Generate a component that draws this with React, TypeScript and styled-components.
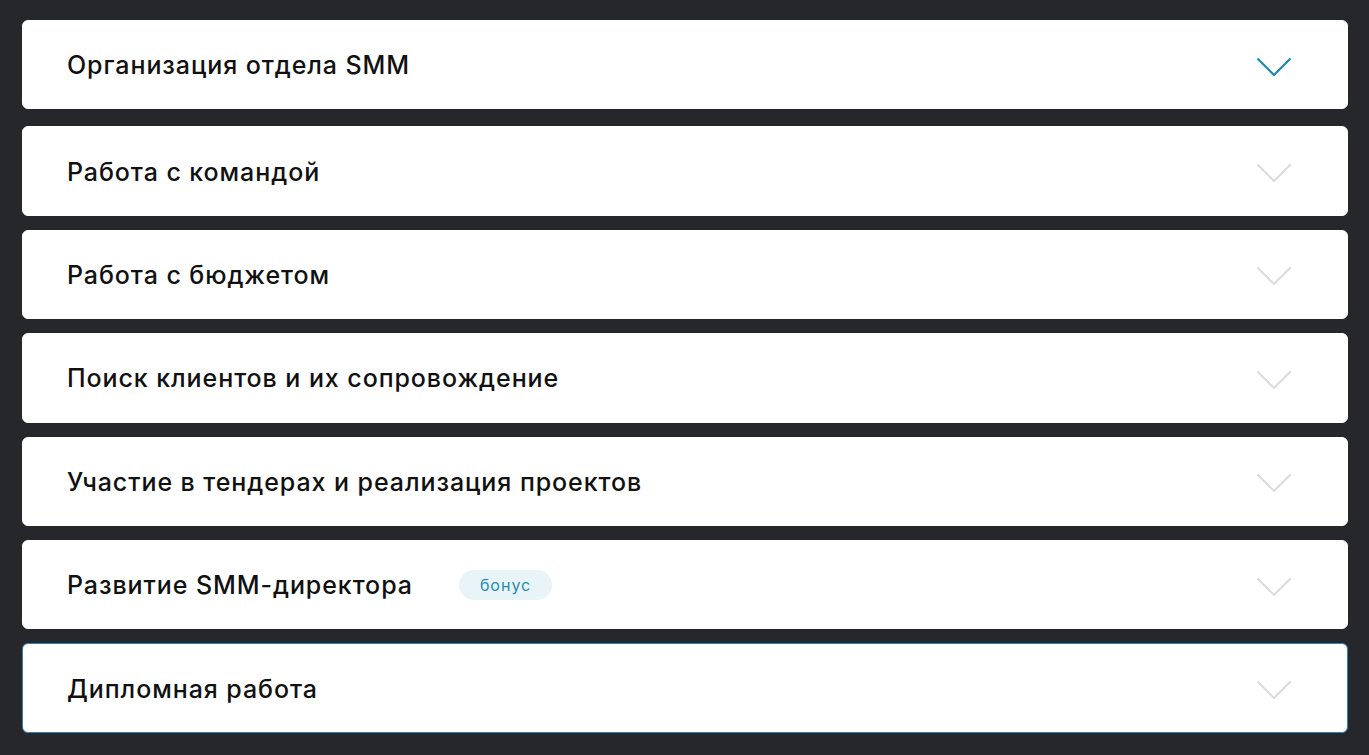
import styled, { createGlobalStyle } from "styled-components";

const GlobalStyle = createGlobalStyle`
  html, body {
    margin: 0;
    padding: 0;
    background: #26272b;
  }
  body {
    font-family: Inter, "Noto Sans", sans-serif;
  }
`;

interface Module {
  title: string;
  bonus?: boolean;
}

const modules: Module[] = [
  { title: "Организация отдела SMM" },
  { title: "Работа с командой" },
  { title: "Работа с бюджетом" },
  { title: "Поиск клиентов и их сопровождение" },
  { title: "Участие в тендерах и реализация проектов" },
  { title: "Развитие SMM-директора", bonus: true },
  { title: "Дипломная работа" },
];

const Chevron = ({ active }: { active: boolean }) => (
  <svg width="36" height="20" viewBox="0 0 36 20" fill="none">
    <path
      d="M1.5 1.5 L18 18 L34.5 1.5"
      stroke={active ? "#1c86b5" : "#dcdcdc"}
      strokeWidth="2.2"
    />
  </svg>
);

const App = () => (
  <>
    <GlobalStyle />
    <StyledList>
      {modules.map((m, i) => (
        <StyledItem
          key={m.title}
          $first={i === 0}
          $focused={i === modules.length - 1}
        >
          <StyledTitle>{m.title}</StyledTitle>
          {m.bonus && <StyledBadge>бонус</StyledBadge>}
          <StyledToggle>
            <Chevron active={i === 0} />
          </StyledToggle>
        </StyledItem>
      ))}
    </StyledList>
  </>
);

const StyledList = styled.div`
  display: flex;
  flex-direction: column;
  gap: 14px;
  padding: 20px 21px 23px 22px;
`;

const StyledItem = styled.div<{ $first: boolean; $focused: boolean }>`
  display: flex;
  align-items: center;
  height: 89.4px;
  box-sizing: border-box;
  padding: 1px 55px 0 44px;
  background: #fff;
  border-radius: 6px;
  border: 1px solid ${({ $focused }) => ($focused ? "#2f7fc1" : "#fff")};
  margin-bottom: ${({ $first }) => ($first ? "3px" : "0")};
`;

const StyledTitle = styled.span`
  font-size: 25px;
  font-weight: 500;
  color: #111;
  letter-spacing: 0.92px;
`;

const StyledBadge = styled.span`
  margin-left: 46px;
  padding: 0 21px;
  height: 30px;
  line-height: 30px;
  border-radius: 15px;
  background: #e8f4f8;
  color: #1e8db5;
  font-size: 16px;
  letter-spacing: 1px;
`;

const StyledToggle = styled.div`
  margin-left: auto;
  display: flex;
  align-items: center;
  margin-top: 3px;
`;

export default App;
